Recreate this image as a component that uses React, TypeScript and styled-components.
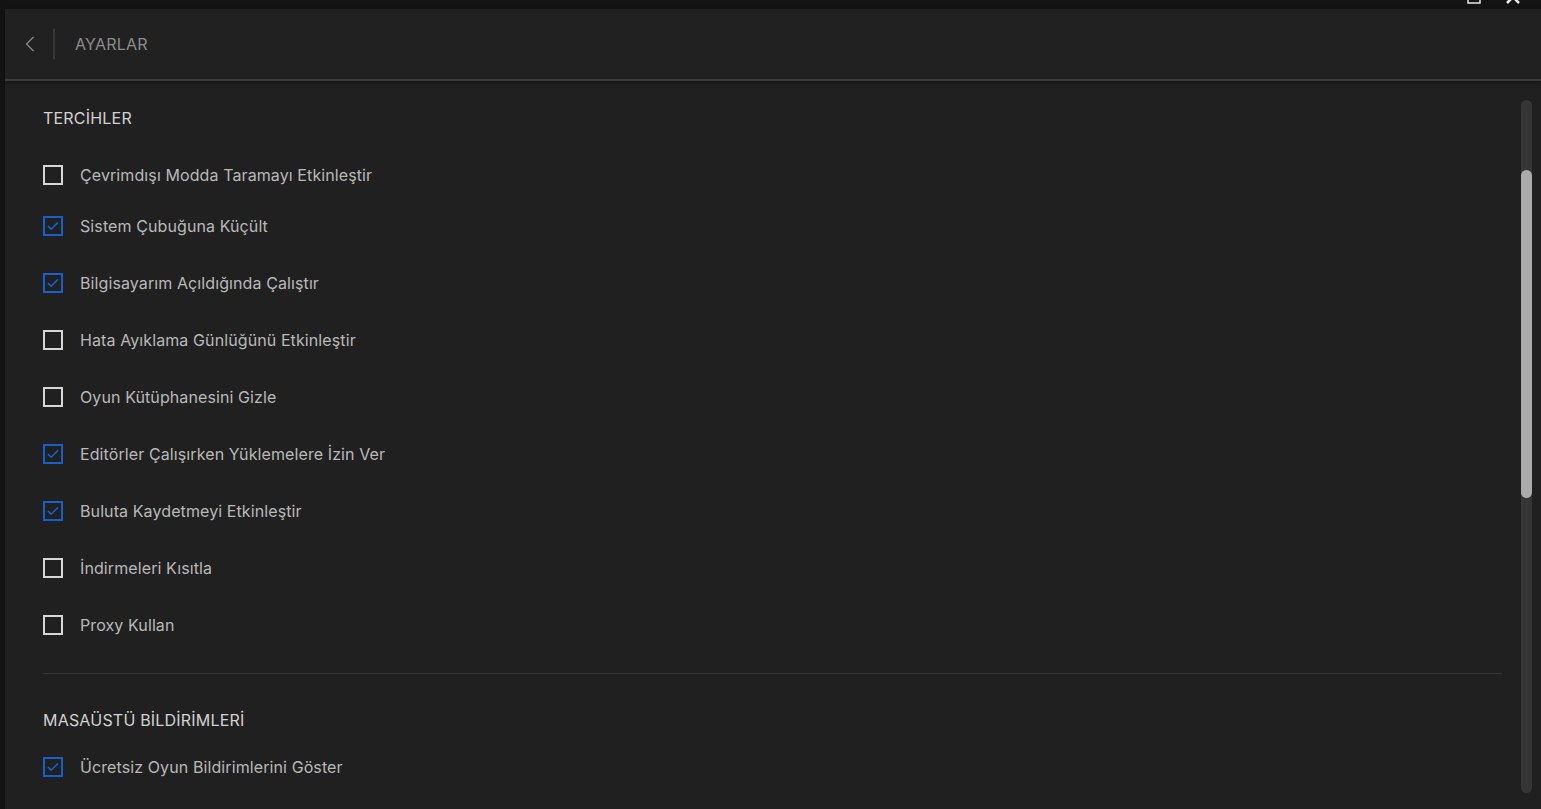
import React from "react";
import styled, { createGlobalStyle } from "styled-components";

const Global = createGlobalStyle`
  html, body { margin: 0; padding: 0; background: #131313; overflow: hidden; }
  body { font-family: Inter, "Noto Sans", "Liberation Sans", sans-serif; }
  * { box-sizing: border-box; }
`;

const Shell = styled.div`
  position: relative;
  width: 1541px;
  height: 809px;
  padding: 9px 0 0 5px;
  background: #131313;
`;

const WindowControls = styled.div`
  position: absolute;
  top: -10px;
  right: 20px;
  display: flex;
  gap: 24px;
  align-items: flex-end;
`;

const Panel = styled.div`
  display: flex;
  flex-direction: column;
  height: 800px;
  background: #202020;
`;

const Header = styled.header`
  display: flex;
  align-items: center;
  height: 72px;
  flex-shrink: 0;
  padding-left: 19px;
  background: #212121;
  border-bottom: 2px solid #3b3b3b;
  box-shadow: 0 2px 4px rgba(0, 0, 0, 0.35);
  position: relative;
  z-index: 1;
`;

const BackButton = styled.button`
  display: flex;
  align-items: center;
  justify-content: center;
  width: 12px;
  height: 20px;
  padding: 0;
  background: none;
  border: none;
  color: #8a8a8a;
`;

const Divider = styled.span`
  width: 2px;
  height: 30px;
  margin: 0 20px 0 17px;
  background: #363636;
`;

const Title = styled.h1`
  margin: 0;
  font-size: 16px;
  font-weight: 400;
  color: #8c8c8c;
  letter-spacing: 0.2px;
  line-height: 20px;
`;

const Body = styled.div`
  display: flex;
  flex: 1;
  min-height: 0;
`;

const Content = styled.main`
  flex: 1;
  padding: 27px 19px 0 38px;
`;

const SectionTitle = styled.h2`
  margin: 0;
  font-size: 16px;
  line-height: 20px;
  font-weight: 400;
  color: #d2d2d2;
  letter-spacing: 0.2px;
`;

const Options = styled.ul<{ $top: number }>`
  list-style: none;
  margin: ${(p) => p.$top}px 0 0;
  padding: 0;
  display: flex;
  flex-direction: column;
  gap: 37px;
`;

const Row = styled.li`
  display: flex;
  align-items: center;
  height: 20px;
  gap: 17px;
  &:first-child.tight { margin-bottom: -6px; }
`;

const Box = styled.span<{ $checked: boolean }>`
  display: flex;
  align-items: center;
  justify-content: center;
  width: 20px;
  height: 20px;
  flex-shrink: 0;
  border: 2px solid ${(p) => (p.$checked ? "#1760cc" : "#d6d6d6")};
  color: #1760cc;
`;

const Label = styled.span`
  font-size: 16px;
  line-height: 20px;
  color: #b9b9b9;
  letter-spacing: 0.1px;
`;

const Rule = styled.hr`
  margin: 38px 0 36px;
  border: none;
  height: 1px;
  background: #353535;
`;

const Track = styled.div`
  position: relative;
  width: 11px;
  margin: 19px 9px 16px 0;
  border-radius: 6px;
  background: #353535;
`;

const Thumb = styled.div`
  position: absolute;
  left: 0;
  right: 0;
  border-radius: 6px;
  background: #ababab;
`;

const Check = () => (
  <svg width="12" height="10" viewBox="0 0 12 10" fill="none">
    <path d="M1 5.2 L4.2 8.2 L11 1.4" stroke="currentColor" strokeWidth="1.6" />
  </svg>
);

type Opt = { label: string; checked: boolean };

const prefs: Opt[] = [
  { label: "Çevrimdışı Modda Taramayı Etkinleştir", checked: false },
  { label: "Sistem Çubuğuna Küçült", checked: true },
  { label: "Bilgisayarım Açıldığında Çalıştır", checked: true },
  { label: "Hata Ayıklama Günlüğünü Etkinleştir", checked: false },
  { label: "Oyun Kütüphanesini Gizle", checked: false },
  { label: "Editörler Çalışırken Yüklemelere İzin Ver", checked: true },
  { label: "Buluta Kaydetmeyi Etkinleştir", checked: true },
  { label: "İndirmeleri Kısıtla", checked: false },
  { label: "Proxy Kullan", checked: false },
];

const notifs: Opt[] = [{ label: "Ücretsiz Oyun Bildirimlerini Göster", checked: true }];

const OptionList = ({ items, top, tight }: { items: Opt[]; top: number; tight?: boolean }) => (
  <Options $top={top}>
    {items.map((o, i) => (
      <Row key={o.label} className={tight && i === 0 ? "tight" : undefined}>
        <Box $checked={o.checked}>{o.checked && <Check />}</Box>
        <Label>{o.label}</Label>
      </Row>
    ))}
  </Options>
);

export default function App() {
  return (
    <>
      <Global />
      <Shell>
        <WindowControls>
          <svg width="14" height="13" viewBox="0 0 14 13" fill="none">
            <rect x="1" y="1" width="12" height="11" stroke="#e8e8e8" strokeWidth="1.5" />
          </svg>
          <svg width="16" height="14" viewBox="0 0 16 14" fill="none">
            <path d="M2 1 L14 13 M14 1 L2 13" stroke="#f0f0f0" strokeWidth="2.5" />
          </svg>
        </WindowControls>
        <Panel>
          <Header>
            <BackButton aria-label="Geri">
              <svg width="10" height="16" viewBox="0 0 10 16" fill="none">
                <path d="M8.5 1 L1.5 8 L8.5 15" stroke="currentColor" strokeWidth="1.3" />
              </svg>
            </BackButton>
            <Divider />
            <Title>AYARLAR</Title>
          </Header>
          <Body>
            <Content>
              <SectionTitle>TERCİHLER</SectionTitle>
              <OptionList items={prefs} top={37} tight />
              <Rule />
              <SectionTitle>MASAÜSTÜ BİLDİRİMLERİ</SectionTitle>
              <OptionList items={notifs} top={27} />
            </Content>
            <Track>
              <Thumb style={{ top: 70, height: 328 }} />
            </Track>
          </Body>
        </Panel>
      </Shell>
    </>
  );
}
